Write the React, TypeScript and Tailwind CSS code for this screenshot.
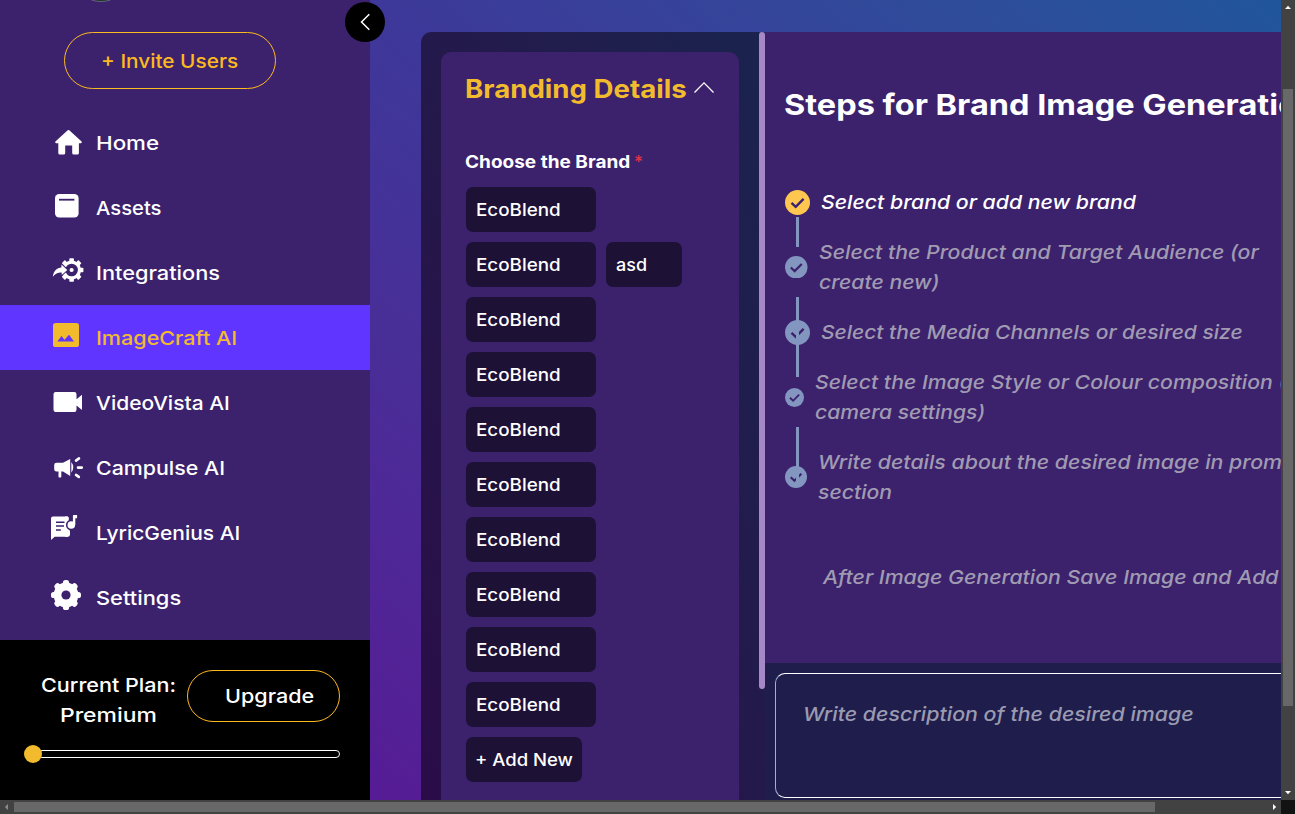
import React from "react";

function T({ className = "", children }: { className?: string; children: React.ReactNode }) {
  return <span className={`inline-block origin-left whitespace-nowrap ${className}`}>{children}</span>;
}

const BG = "#3c216d";

const HomeIcon = () => (
  <path
    fill="currentColor"
    d="M17.7 5.3q.8-.6 1.6 0L31.6 16.6q.8 1.2-.6 1.6H28.9V28a1.5 1.5 0 0 1-1.5 1.5h-3.7a1.5 1.5 0 0 1-1.5-1.5v-7.6h-7V28a1.5 1.5 0 0 1-1.5 1.5H9.8A1.5 1.5 0 0 1 8.3 28v-9.8H6q-1.4-.4-.6-1.6z"
  />
);

const AssetsIcon = () => (
  <>
    <rect x="5" y="4" width="23.6" height="23.6" rx="4.2" fill="currentColor" />
    <rect x="9" y="8.8" width="15.4" height="1.8" fill={BG} />
  </>
);

const IntegrationsIcon = () => (
  <>
    <circle cx="21.6" cy="15" r="7.9" fill="none" stroke="currentColor" strokeWidth="3.2" />
    {[0, 45, 90, 135, 180, 225, 270, 315].map((a) => (
      <rect key={a} x="19.3" y="3.2" width="4.6" height="3.8" rx=".8" fill="currentColor" transform={`rotate(${a} 21.6 15)`} />
    ))}
    <circle cx="21.6" cy="15" r="2.1" fill="currentColor" />
    <path
      d="M2.8 21.8C3.6 16 7 13 11.4 12.6V9.4L17.3 15l-5.6 4.9v-2.300C8 17.400 5.6 18.700 2.8 21.800z"
      fill="currentColor"
      stroke={BG}
      strokeWidth="2"
      paintOrder="stroke"
    />
  </>
);

const ImageIcon = () => (
  <>
    <rect x="3" y="3" width="26" height="24" rx="2.6" fill="currentColor" />
    <path d="M7.300 21.600l4.200-5.600 3 3.700 4.500-4.900 5 6.800z" fill="#5f35ff" />
  </>
);

const VideoIcon = () => (
  <path
    fill="currentColor"
    d="M5.700 7h18.600a2.200 2.200 0 0 1 2.200 2.200v5L32 9.700v15.400l-5.500-4.600v4.200a2.200 2.200 0 0 1-2.200 2.200H5.700a2.200 2.200 0 0 1-2.200-2.200V9.200A2.200 2.200 0 0 1 5.700 7z"
  />
);

const CampaignIcon = () => (
  <>
    <path
      fill="currentColor"
      d="M6.500 12.800H13l7.200-3.900v17.200L13 21.600h-1.700v5.100a.8.8 0 0 1-.8.8H9.300a.8.8 0 0 1-.8-.8v-5.100h-2a2.300 2.300 0 0 1-2.300-2.300v-4.200a2.300 2.300 0 0 1 2.300-2.300z"
    />
    <path d="M21.300 12q4 5.400 0 10.800z" fill="currentColor" />
    <path d="M26 10.600l3-2.200M28 17.600h3.800M26 24.900l2.800 2" fill="none" stroke="currentColor" strokeWidth="2.600" strokeLinecap="round" />
  </>
);

const LyricIcon = () => (
  <>
    <path fill="currentColor" d="M3 1.400h15v20.300H4.700L1 25V3.400a2 2 0 0 1 2-2z" />
    <path fill="currentColor" d="M17 1.400l1.800.8v12.600l1.200 1v3.700a2.200 2.200 0 0 1-2.200 2.200H15V1.400z" />
    <path d="M6 7.300h8.500M6 11.100h8M6 15h4.800" stroke={BG} strokeWidth="1.500" />
    <circle cx="21.300" cy="10" r="4.600" fill="currentColor" stroke={BG} strokeWidth="1.600" />
    <path fill="currentColor" d="M22.900 10V.9q0-.9.9-.9h3.300v3.300h-1.800V10z" />
    <path fill="currentColor" d="M17.300 14.300q1.500 1.500 2.700 1.600l-1 3-4-1z" />
  </>
);

const SettingsIcon = () => (
  <>
    <circle cx="16" cy="15" r="12.400" fill="currentColor" />
    {[0, 45, 90, 135, 180, 225, 270, 315].map((a) => (
      <rect key={a} x="12.900" y="0" width="6.200" height="8" rx="2.600" fill="currentColor" transform={`rotate(${a} 16 15)`} />
    ))}
    <circle cx="16" cy="15" r="4.600" fill={BG} />
  </>
);

const NAV = [
  { label: "Home", icon: HomeIcon, scale: "scale-x-[1.16]" },
  { label: "Assets", icon: AssetsIcon, scale: "scale-x-[1.05]" },
  { label: "Integrations", icon: IntegrationsIcon, scale: "scale-x-[1.13]" },
  { label: "ImageCraft AI", icon: ImageIcon, scale: "scale-x-[1.12]", active: true },
  { label: "VideoVista AI", icon: VideoIcon, scale: "scale-x-[1.09]" },
  { label: "Campulse AI", icon: CampaignIcon, scale: "scale-x-[1.11]" },
  { label: "LyricGenius AI", icon: LyricIcon, scale: "scale-x-[1.09]" },
  { label: "Settings", icon: SettingsIcon, scale: "scale-x-[1.135]" },
];

function Sidebar() {
  return (
    <aside className="relative flex h-[800px] w-[370px] shrink-0 flex-col bg-[#3c216d] text-white">
      <div className="absolute -top-[58px] left-[71px] h-[60px] w-[60px] rounded-full border border-[#6a6480] bg-[#17351f]" />
      <button className="mt-8 ml-16 flex h-[57px] w-[212px] shrink-0 items-center rounded-full border border-[#fdba1e] pt-[2px] pl-9 text-[19.25px] font-medium text-[#fdba1e]">
        <T className="scale-x-[1.08]">+ Invite Users</T>
      </button>
      <nav className="mt-[21px] flex flex-col">
        {NAV.map(({ label, icon: Icon, scale, active }) => (
          <a
            key={label}
            className={`flex h-[65px] items-center pl-[50px] text-[19.25px] font-medium ${active ? "bg-[#5f35ff] text-[#f2bb2e]" : ""}`}
          >
            <svg width="35" height="35" viewBox="0 0 35 35" className="shrink-0">
              <Icon />
            </svg>
            <T className={`ml-[11px] pt-[2px] ${scale}`}>{label}</T>
          </a>
        ))}
      </nav>
      <div className="mt-auto flex h-[160px] flex-col bg-black">
        <div className="mt-[30px] flex h-[60px]">
          <div className="ml-[41px] flex w-[146px] flex-col text-[19.25px] leading-[30px] font-medium">
            <T className="scale-x-[1.12]">Current Plan:</T>
            <T className="ml-[19px] scale-x-[1.19]">Premium</T>
          </div>
          <button className="flex h-[52px] w-[153px] items-center rounded-full border border-[#fdba1e] pl-[37px] text-[19.25px] font-medium">
            <T className="scale-x-[1.12]">Upgrade</T>
          </button>
        </div>
        <div className="mt-[15px] ml-6 flex items-center">
          <div className="z-10 h-[18px] w-[18px] rounded-full bg-[#f2bb2e]" />
          <div className="-ml-1 h-2 w-[302px] rounded-full border border-white" />
        </div>
      </div>
      <button className="absolute top-[2px] left-[345px] z-10 flex h-10 w-10 items-center justify-center rounded-full bg-black">
        <svg width="20" height="20" viewBox="0 0 20 20" fill="none" stroke="#fff" strokeWidth="1.500">
          <path d="M14.300 2.200L6.500 10l7.800 7.800" />
        </svg>
      </button>
    </aside>
  );
}

const chip = "flex h-[45px] items-center rounded-[7px] bg-[#1e1136] pl-[10px] text-[17.3px] font-medium";

function BrandPanel() {
  return (
    <section className="flex w-[344px] shrink-0 rounded-tl-[10px] bg-linear-to-tr from-[#2a0c48] to-[#1a234e] text-white">
      <div className="mt-5 ml-5 w-[298px] rounded-t-[10px] bg-[#3c216d] px-[25px]">
        <div className="mt-[18px] flex h-10 items-center justify-between">
          <h2 className="text-[25px] font-bold text-[#f2bb2e]">
            <T className="-ml-px scale-x-[1.105]">Branding Details</T>
          </h2>
          <svg width="20" height="20" viewBox="0 0 20 20" fill="none" stroke="#fff" strokeWidth="1.300" className="mb-1">
            <path d="M.5 14.500L10 4.900l9.500 9.600" />
          </svg>
        </div>
        <div className="mt-[37px] flex h-[30px] items-center text-[17.3px] font-bold">
          <T className="-ml-[1px] w-[169px] scale-x-[1.1]">Choose the Brand</T>
          <span className="font-medium text-[#dc3545]">*</span>
        </div>
        <div className="mt-[10px] flex flex-wrap gap-[10px]">
          {Array.from({ length: 10 }, (_, i) => (
            <React.Fragment key={i}>
              <button className={`${chip} ${i === 1 ? "w-[130px]" : "mr-[100px] w-[130px]"}`}>
                <T className="pt-px scale-x-[1.09]">EcoBlend</T>
              </button>
              {i === 1 && (
                <button className={`${chip} w-[76px]`}>
                  <T className="pt-px scale-x-[1.04]">asd</T>
                </button>
              )}
            </React.Fragment>
          ))}
          <button className={`${chip} w-[116px]`}>
            <T className="-ml-px pt-px scale-x-[1.07]">+ Add New</T>
          </button>
        </div>
      </div>
      <div className="ml-5 h-[657px] w-[6px] rounded-full bg-[#a588c5]" />
    </section>
  );
}

const STEPS = [
  { size: 25, done: true, line: "h-[30px]", lines: [["Select brand or add new brand", "scale-x-[1.105]"]] },
  {
    size: 22.5,
    line: "h-[60px]",
    lines: [
      ["Select the Product and Target Audience (or", "scale-x-[1.105]"],
      ["create new)", "scale-x-[1.1]"],
    ],
  },
  { size: 25, line: "h-[30px]", lines: [["Select the Media Channels or desired size", "scale-x-[1.091]"]] },
  {
    size: 19,
    line: "h-[60px]",
    lines: [
      ["Select the Image Style or Colour composition (&", "scale-x-[1.103]"],
      ["camera settings)", "scale-x-[1.095]"],
    ],
  },
  {
    size: 22,
    line: "",
    lines: [
      ["Write details about the desired image in prompt", "scale-x-[1.108]"],
      ["section", "scale-x-[1.1]"],
    ],
  },
];

function Steps() {
  return (
    <div className="h-[631px] overflow-hidden bg-[#3c216d] pl-5">
      <h1 className="mt-[53px] h-10 text-[29px] leading-10 font-bold text-white">
        <T className="-ml-px scale-x-[1.12]">Steps for Brand Image Generation</T>
      </h1>
      <ol className="mt-[62px] flex flex-col gap-5">
        {STEPS.map((s, i) => (
          <li
            key={i}
            className={`relative flex items-center text-[19.25px] leading-[30px] font-medium italic ${s.done ? "text-white" : "text-[#a09bb1]"}`}
          >
            <svg width={s.size} height={s.size} viewBox="0 0 25 25" className="shrink-0">
              <circle cx="12.500" cy="12.500" r="12.500" fill={s.done ? "#ffc750" : "#8296bf"} />
              <path d="M6.500 12.800l4.200 4 7.900-8" fill="none" stroke={BG} strokeWidth="2.400" />
            </svg>
            <div className="ml-[11px] flex flex-col">
              {s.lines.map(([text, scale]) => (
                <T key={text} className={scale}>
                  {text}
                </T>
              ))}
            </div>
            {s.line && <span className={`absolute top-full left-[11px] z-10 w-[3px] bg-[#8296bf] ${s.line}`} />}
          </li>
        ))}
      </ol>
      <p className="mt-[55px] ml-[38px] text-[19.25px] leading-[30px] font-medium text-[#a09bb1] italic">
        <T className="scale-x-[1.107]">After Image Generation Save Image and Add to</T>
      </p>
    </div>
  );
}

function Prompt() {
  return (
    <div className="h-[137px] bg-[#1f1d4c] pt-[10px] pl-[10px]">
      <div className="h-[125px] w-[700px] rounded-[10px] border border-white border-l-[#9fb0d4] pt-[25px] pl-[27px] text-[19.25px] leading-[30px] font-medium text-[#9a9ab0] italic">
        <T className="scale-x-[1.11]">Write description of the desired image</T>
      </div>
    </div>
  );
}

export default function App() {
  return (
    <div className="grid h-[814px] w-[1295px] grid-cols-[1281px_14px] grid-rows-[800px_14px] overflow-hidden font-['Inter',sans-serif]">
      <div className="flex overflow-hidden">
        <Sidebar />
        <main className="flex w-[911px] shrink-0 overflow-hidden bg-linear-to-tr from-[#561b95] via-[#3d3899] to-[#20569b] pt-8 pl-[51px]">
          <BrandPanel />
          <section className="w-[516px] shrink-0 overflow-hidden">
            <Steps />
            <Prompt />
          </section>
        </main>
      </div>
      <div className="flex flex-col items-center bg-[#424242]">
        <svg width="14" height="14" viewBox="0 0 14 14" className="shrink-0">
          <path d="M4 9l3-3.200L10 9z" fill="#fff" />
        </svg>
        <div className="mt-[75px] h-[617px] w-[10px] bg-[#686868]" />
        <svg width="14" height="14" viewBox="0 0 14 14" className="mt-auto shrink-0">
          <path d="M4 5l3 3.200L10 5z" fill="#fff" />
        </svg>
      </div>
      <div className="flex items-center bg-[#424242]">
        <svg width="14" height="14" viewBox="0 0 14 14" className="shrink-0">
          <path d="M8 4L4.800 7 8 10z" fill="#8a8a8a" />
        </svg>
        <div className="h-[10px] w-[1141px] bg-[#686868]" />
        <svg width="14" height="14" viewBox="0 0 14 14" className="ml-auto shrink-0">
          <path d="M6 4l3.200 3L6 10z" fill="#fff" />
        </svg>
      </div>
      <div className="bg-[#121212]" />
    </div>
  );
}
